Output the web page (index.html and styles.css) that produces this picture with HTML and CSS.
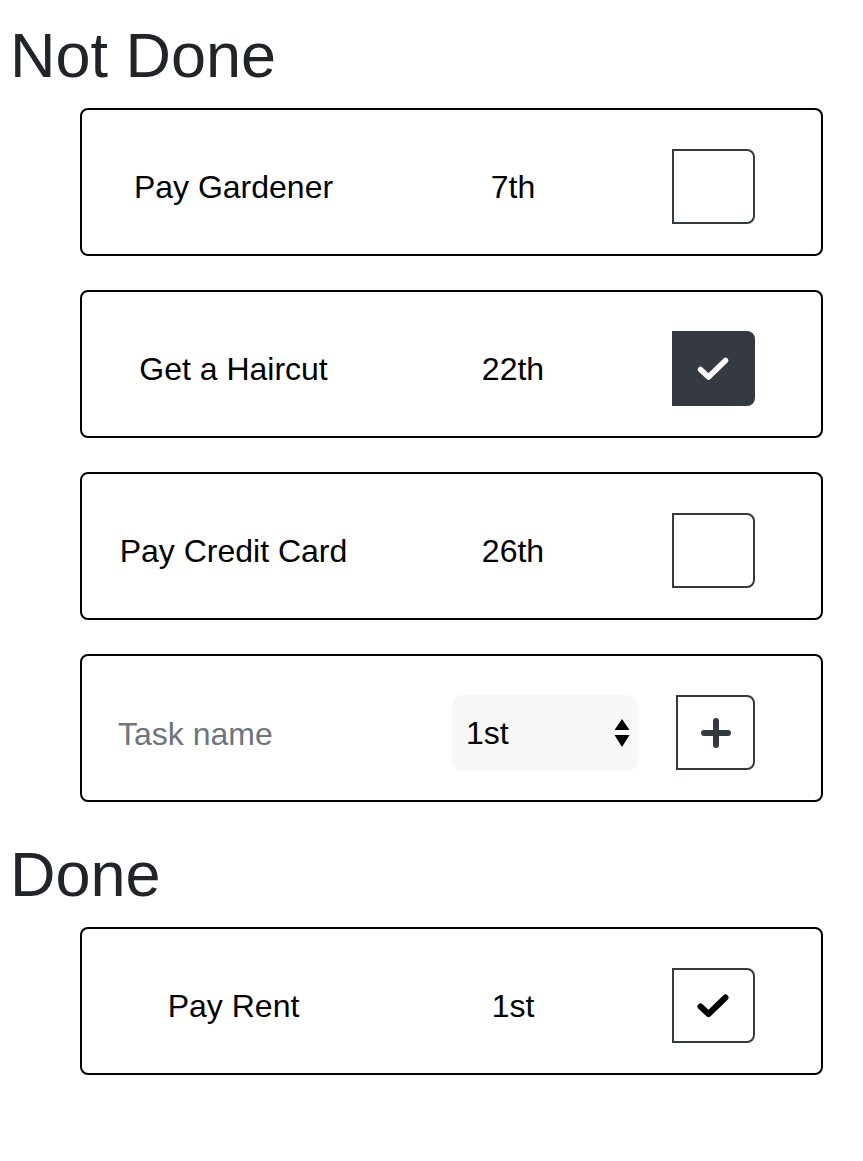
FILE: index.html
```html
<!DOCTYPE html>
<html lang="en">
<head>
<meta charset="utf-8">
<title>Tasks</title>
<link rel="stylesheet" href="styles.css">
</head>
<body>
<div class="page">
  <h1 class="section-title">Not Done</h1>

  <div class="task">
    <div class="col-name">Pay Gardener</div>
    <div class="col-date">7th</div>
    <div class="col-action"><button class="check" aria-label="Mark done"></button></div>
  </div>

  <div class="task">
    <div class="col-name">Get a Haircut</div>
    <div class="col-date">22th</div>
    <div class="col-action">
      <button class="check check-filled" aria-label="Marked">
        <svg class="tick" viewBox="0 0 32 24" width="32" height="24"><path d="M3.5 12.5 L11.5 20 L28.5 3.5" fill="none" stroke="#fff" stroke-width="5.5" stroke-linecap="round" stroke-linejoin="round"/></svg>
      </button>
    </div>
  </div>

  <div class="task">
    <div class="col-name">Pay Credit Card</div>
    <div class="col-date">26th</div>
    <div class="col-action"><button class="check" aria-label="Mark done"></button></div>
  </div>

  <div class="task">
    <div class="col-name col-input"><input class="name-input" type="text" placeholder="Task name"></div>
    <div class="col-date col-select">
      <div class="select-wrap">
        <select class="day-select"><option>1st</option><option>2nd</option><option>3rd</option></select>
        <svg class="select-arrows" viewBox="0 0 16 28" width="16" height="28"><path d="M0.5 11 L8 0 L15.5 11 Z M0.5 16 L15.5 16 L8 28 Z" fill="#000"/></svg>
      </div>
    </div>
    <div class="col-action">
      <button class="add" aria-label="Add task">
        <svg viewBox="0 0 30 30" width="30" height="30"><path d="M15 3 V27 M3 15 H27" fill="none" stroke="#343a40" stroke-width="6" stroke-linecap="round"/></svg>
      </button>
    </div>
  </div>

  <h1 class="section-title">Done</h1>

  <div class="task">
    <div class="col-name">Pay Rent</div>
    <div class="col-date">1st</div>
    <div class="col-action">
      <button class="check" aria-label="Done">
        <svg class="tick" viewBox="0 0 32 24" width="32" height="24"><path d="M3.5 12.5 L11.5 20 L28.5 3.5" fill="none" stroke="#000" stroke-width="6" stroke-linecap="round" stroke-linejoin="round"/></svg>
      </button>
    </div>
  </div>
</div>
</body>
</html>
```

FILE: styles.css
```css
html, body {
  margin: 0;
  padding: 0;
  background: #fff;
}

body {
  font-family: "Liberation Sans", Arial, Helvetica, sans-serif;
  color: #000;
}

.page {
  padding: 17px 40px 0 5px;
}

.section-title {
  margin: 0 0 14px 0;
  padding-left: 5px;
  font-size: 63px;
  font-weight: 400;
  line-height: 77px;
  color: #212529;
}

.task {
  box-sizing: border-box;
  margin: 0 0 34px 75px;
  height: 148px;
  border: 2px solid #000;
  border-radius: 8px;
  padding-top: 9px;
  display: grid;
  grid-template-columns: 303px 256px 1fr;
  align-items: center;
  font-size: 32px;
  line-height: 1.5;
}

.col-name,
.col-date {
  text-align: center;
}

.col-input {
  text-align: left;
}

.col-select {
  text-align: left;
}

.col-action {
  display: flex;
  justify-content: flex-end;
  padding-right: 66px;
}

.check {
  box-sizing: border-box;
  width: 83px;
  height: 75px;
  margin: 0;
  padding: 0;
  border: 2px solid #343a40;
  border-radius: 0 8px 8px 0;
  background: #fff;
  display: flex;
  align-items: center;
  justify-content: center;
}

.check-filled {
  background: #343a40;
}

.tick {
  display: block;
  margin-left: -2px;
}

.name-input {
  box-sizing: border-box;
  width: 100%;
  border: none;
  outline: none;
  background: transparent;
  padding: 2px 0 0 36px;
  font-family: inherit;
  font-size: 32px;
  line-height: 1.5;
  color: #000;
}

.name-input::placeholder {
  color: #6c757d;
  opacity: 1;
}

.select-wrap {
  position: relative;
  width: 186px;
  height: 76px;
  margin-left: 67px;
}

.day-select {
  -webkit-appearance: none;
  appearance: none;
  box-sizing: border-box;
  width: 100%;
  height: 100%;
  margin: 0;
  border: none;
  border-radius: 10px;
  background: #f7f7f7;
  padding: 0 0 0 14px;
  font-family: inherit;
  font-size: 32px;
  color: #000;
  outline: none;
}

.select-arrows {
  position: absolute;
  right: 8px;
  top: 24px;
  pointer-events: none;
}

.add {
  box-sizing: border-box;
  width: 79px;
  height: 75px;
  margin: 0;
  padding: 0;
  border: 2px solid #343a40;
  border-radius: 0 8px 8px 0;
  background: #fff;
  display: flex;
  align-items: center;
  justify-content: center;
}

.add svg {
  display: block;
}
```
